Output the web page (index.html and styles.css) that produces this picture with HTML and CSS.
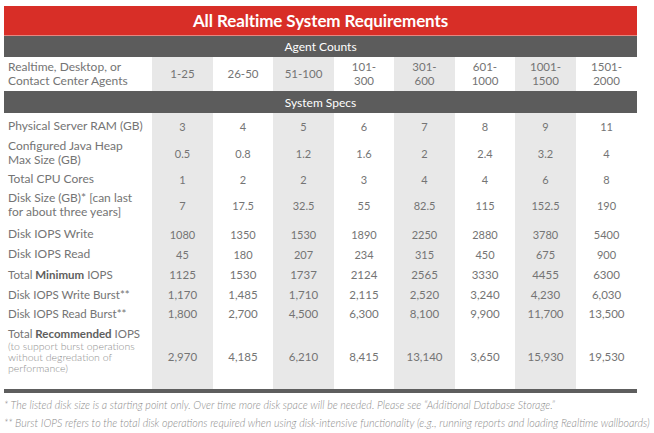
FILE: index.html
```html
<!DOCTYPE html>
<html lang="en">
<head>
<meta charset="utf-8">
<title>All Realtime System Requirements</title>
<link rel="stylesheet" href="styles.css">
</head>
<body>
<div class="sheet">
  <div class="title">All Realtime System Requirements</div>
  <table class="req">
    <colgroup>
      <col class="c-label">
      <col class="c-a"><col class="c-b"><col class="c-a"><col class="c-b">
      <col class="c-a"><col class="c-b"><col class="c-a"><col class="c-a">
    </colgroup>
    <tr class="section agentbar"><td colspan="9">Agent Counts</td></tr>
    <tr class="agents">
      <th>Realtime, Desktop, or<br>Contact Center Agents</th>
      <td>1-25</td><td>26-50</td><td>51-100</td><td>101-<br>300</td>
      <td>301-<br>600</td><td>601-<br>1000</td><td>1001-<br>1500</td><td>1501-<br>2000</td>
    </tr>
    <tr class="section specbar"><td colspan="9">System Specs</td></tr>
    <tr class="r-ram">
      <th>Physical Server RAM (GB)</th>
      <td>3</td><td>4</td><td>5</td><td>6</td><td>7</td><td>8</td><td>9</td><td>11</td>
    </tr>
    <tr class="r-heap">
      <th>Configured Java Heap<br>Max Size (GB)</th>
      <td>0.5</td><td>0.8</td><td>1.2</td><td>1.6</td><td>2</td><td>2.4</td><td>3.2</td><td>4</td>
    </tr>
    <tr class="r-cpu">
      <th>Total CPU Cores</th>
      <td>1</td><td>2</td><td>2</td><td>3</td><td>4</td><td>4</td><td>6</td><td>8</td>
    </tr>
    <tr class="r-disk">
      <th>Disk Size (GB)* [can last<br>for about three years]</th>
      <td>7</td><td>17.5</td><td>32.5</td><td>55</td><td>82.5</td><td>115</td><td>152.5</td><td>190</td>
    </tr>
    <tr class="r-write">
      <th>Disk IOPS Write</th>
      <td>1080</td><td>1350</td><td>1530</td><td>1890</td><td>2250</td><td>2880</td><td>3780</td><td>5400</td>
    </tr>
    <tr class="r-read">
      <th>Disk IOPS Read</th>
      <td>45</td><td>180</td><td>207</td><td>234</td><td>315</td><td>450</td><td>675</td><td>900</td>
    </tr>
    <tr class="r-min alt">
      <th>Total <b>Minimum</b> IOPS</th>
      <td>1125</td><td>1530</td><td>1737</td><td>2124</td><td>2565</td><td>3330</td><td>4455</td><td>6300</td>
    </tr>
    <tr class="r-wb alt">
      <th>Disk IOPS Write Burst**</th>
      <td>1,170</td><td>1,485</td><td>1,710</td><td>2,115</td><td>2,520</td><td>3,240</td><td>4,230</td><td>6,030</td>
    </tr>
    <tr class="r-rb alt">
      <th>Disk IOPS Read Burst**</th>
      <td>1,800</td><td>2,700</td><td>4,500</td><td>6,300</td><td>8,100</td><td>9,900</td><td>11,700</td><td>13,500</td>
    </tr>
    <tr class="r-rec alt">
      <th><span class="rec-head">Total <b>Recommended</b> IOPS</span><span class="rec-sub">(to support burst operations<br>without degredation of<br>performance)</span></th>
      <td>2,970</td><td>4,185</td><td>6,210</td><td>8,415</td><td>13,140</td><td>3,650</td><td>15,930</td><td>19,530</td>
    </tr>
  </table>
  <p class="note">* The listed disk size is a starting point only. Over time more disk space will be needed. Please see “Additional Database Storage.”</p>
  <p class="note">** Burst IOPS refers to the total disk operations required when using disk-intensive functionality (e.g., running reports and loading Realtime wallboards)</p>
</div>
</body>
</html>
```

FILE: styles.css
```css
body {
  margin: 0;
  background: #ffffff;
  font-family: "Lato", "Open Sans", sans-serif;
  color: #747474;
}

.sheet {
  width: 633px;
  margin: 6px 0 0 4px;
}

.title {
  height: 29px;
  line-height: 30px;
  background: #d82e27;
  border-bottom: 1px solid #e6857f;
  color: #ffffff;
  font-weight: 700;
  font-size: 17px;
  letter-spacing: -0.1px;
  text-align: center;
}

.req {
  width: 633px;
  table-layout: fixed;
  border-collapse: separate;
  border-spacing: 0;
  border-bottom: 4px solid #5e5e5e;
}

.c-label { width: 148px; }
.c-a { width: 61px; }
.c-b { width: 60px; }

.req th,
.req td {
  padding: 0;
  font-size: 11px;
  line-height: 13px;
  font-weight: 400;
  vertical-align: middle;
}

.req th {
  text-align: left;
  padding-left: 4px;
  font-size: 12px;
  line-height: 14px;
}

.req td {
  text-align: center;
}

.req tr td:nth-child(even) {
  background: #e8e8e8;
}

.req .section td {
  background: #5c5c5c;
  color: #ffffff;
  font-size: 12px;
  text-align: center;
}

.agentbar { height: 21px; }
.specbar { height: 22px; }

.agents { height: 34px; }
.agents td { font-size: 11.5px; line-height: 14px; }
.agents th { line-height: 14px; }

.r-ram { height: 26px; }
.r-heap { height: 28px; }
.r-cpu { height: 24px; }
.r-disk { height: 28px; }
.r-write { height: 25px; }
.r-write th, .r-write td { padding-top: 5px; }
.r-read { height: 20px; }
.r-min { height: 21px; }
.r-wb { height: 19px; }
.r-rb { height: 19px; }
.r-rec { height: 66px; }

.alt th, .alt td {
  font-size: 11.5px;
}

.alt b {
  font-weight: 700;
  color: #5e5e5e;
}

.r-rec th {
  vertical-align: top;
  padding-top: 3px;
}

.rec-head {
  display: block;
  line-height: 15px;
}

.rec-sub {
  display: block;
  font-size: 10.5px;
  line-height: 11px;
  font-weight: 300;
  color: #8e8e8e;
}

.note {
  margin: 0;
  font-size: 10.7px;
  line-height: 18px;
  font-style: italic;
  font-weight: 300;
  color: #8c8c8c;
  white-space: nowrap;
}

.note:first-of-type {
  margin-top: 3px;
}
```
